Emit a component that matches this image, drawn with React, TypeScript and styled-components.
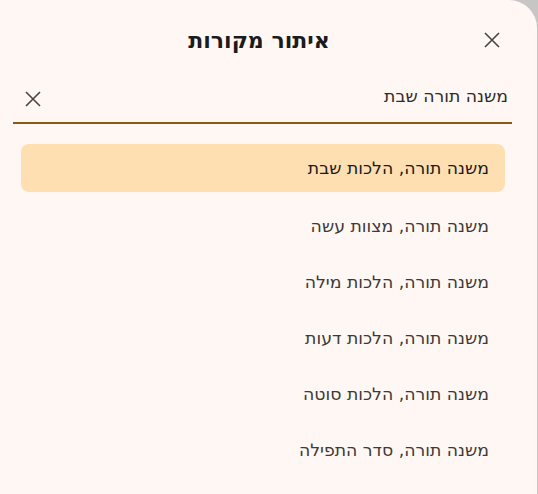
import * as React from 'react';
import styled, {createGlobalStyle} from 'styled-components';

const GlobalStyle = createGlobalStyle`
    html, body {
        margin: 0;
        padding: 0;
        background: #c8c6c5;
    }
    * {
        box-sizing: border-box;
    }
`;

const sources = [
    'משנה תורה, הלכות שבת',
    'משנה תורה, מצוות עשה',
    'משנה תורה, הלכות מילה',
    'משנה תורה, הלכות דעות',
    'משנה תורה, הלכות סוטה',
    'משנה תורה, סדר התפילה',
];

const Dialog = styled.div`
    direction: rtl;
    width: 537px;
    height: 494px;
    overflow: hidden;
    background: #fff7f4;
    border-top-right-radius: 28px;
    font-family: 'DejaVu Sans', 'Noto Sans', sans-serif;
    color: #1d1b1a;
`;

const Header = styled.div`
    display: flex;
    align-items: center;
    height: 48px;
    margin-top: 16px;
    padding: 0 25px 0 46px;
`;

const Title = styled.h2`
    flex: 1;
    margin: 0;
    text-align: center;
    font-size: 22px;
    font-weight: 700;
    color: #1c1b1b;
`;

const IconButton = styled.button`
    display: flex;
    align-items: center;
    justify-content: center;
    width: 40px;
    height: 40px;
    padding: 0;
    border: none;
    background: transparent;
    color: #4a4540;
    cursor: pointer;
`;

const SearchField = styled.div`
    display: flex;
    align-items: center;
    height: 48px;
    margin: 12px 25px 0 13px;
    border-bottom: 2px solid #8a5a14;
`;

const SearchInput = styled.input`
    flex: 1;
    min-width: 0;
    height: 100%;
    padding: 0 4px 6px 0;
    border: none;
    outline: none;
    background: transparent;
    direction: rtl;
    font-family: inherit;
    font-size: 17.3px;
    color: #2e2b29;
`;

const List = styled.ul`
    display: flex;
    flex-direction: column;
    gap: 8px;
    margin: 20px 32px 0 21px;
    padding: 0;
    list-style: none;
`;

const Item = styled.li<{active?: boolean}>`
    display: flex;
    align-items: center;
    height: 48px;
    padding: 0 16px;
    border-radius: 8px;
    background: ${props => (props.active ? '#fedfb2' : 'transparent')};
    font-size: 17.3px;
    color: ${props => (props.active ? '#1d1b1a' : '#3d3a38')};

    &:first-child {
        margin-bottom: 2px;
    }
`;

function CloseIcon(): JSX.Element {
    return (
        <svg width="16" height="16" viewBox="0 0 16 16" fill="none" stroke="currentColor" strokeWidth="1.6">
            <path d="M1 1L15 15M15 1L1 15" />
        </svg>
    );
}

export default function App(): JSX.Element {
    return (
        <>
            <GlobalStyle />
            <Dialog>
                <Header>
                    <IconButton aria-label="סגירה">
                        <CloseIcon />
                    </IconButton>
                    <Title>איתור מקורות</Title>
                </Header>
                <SearchField>
                    <SearchInput defaultValue="משנה תורה שבת" />
                    <IconButton aria-label="ניקוי">
                        <CloseIcon />
                    </IconButton>
                </SearchField>
                <List>
                    {sources.map((s, i) => (
                        <Item key={s} active={i === 0}>
                            {s}
                        </Item>
                    ))}
                </List>
            </Dialog>
        </>
    );
}
